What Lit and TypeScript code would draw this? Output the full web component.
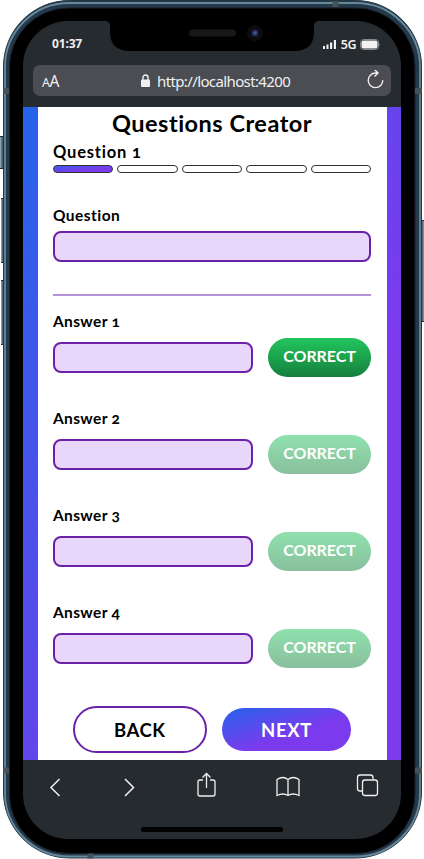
import { LitElement, html, svg, css } from "lit";
import { customElement } from "lit/decorators.js";

@customElement("pill-button")
class PillButton extends LitElement {
  static properties = { label: {}, kind: {} };
  declare label: string;
  declare kind: string;
  static styles = css`
    :host { display: block; }
    .b { box-sizing: border-box; width: 100%; height: 100%; border: 0; border-radius: 99px; padding: 0;
      display: block; color: #fff; font-family: Lato, sans-serif; font-weight: 700; text-align: center; }
    .correct { background: linear-gradient(#22c55e, #15803d); font-size: 16px; line-height: 36px; letter-spacing: -0.1px; height: 39px; padding-bottom: 3px; }
    .back { border: 2px solid #6b21a8; background: #fff; color: #000; font-size: 18.5px; letter-spacing: 0.5px; }
    .next { background: linear-gradient(to bottom right, #2563eb, #7c3aed 60%); font-size: 18.5px; letter-spacing: 0.6px; }
  `;
  render() {
    return html`<button class="b ${this.kind}">${this.label}</button>`;
  }
}

@customElement("answer-row")
class AnswerRow extends LitElement {
  static properties = { index: { type: Number }, chosen: { type: Boolean } };
  declare index: number;
  declare chosen: boolean;
  static styles = css`
    :host { display: block; height: 97px; }
    .label { height: 20px; line-height: 20px; font-weight: 700; font-size: 15.5px; letter-spacing: 0.35px; }
    .row { display: flex; gap: 15px; align-items: center; margin-top: 6.5px; height: 39px; }
    .input { box-sizing: border-box; width: 200px; height: 31px; border: 2px solid #6b21a8; border-radius: 8px; background: #e8d6fb; }
    .btn { width: 103px; height: 39px; }
    .faded { opacity: 0.5; }
  `;
  render() {
    return html`<div class="label">Answer ${this.index}</div>
      <div class="row">
        <div class="input"></div>
        <pill-button class="btn ${this.chosen ? "" : "faded"}" label="CORRECT" kind="correct"></pill-button>
      </div>`;
  }
}

@customElement("app-root")
class AppRoot extends LitElement {
  static styles = css`
    :host { display: block; position: relative; width: 424px; height: 859px; overflow: hidden; background: #fff; }
    .frame { position: absolute; left: 0; top: 0; }
    .screen { position: absolute; left: 23px; top: 21px; width: 378px; height: 818px; border-radius: 45px; overflow: hidden;
      background: #262b2f; display: flex; flex-direction: column; }
    .top { height: 86px; flex: none; box-sizing: border-box; padding: 12px 10px 0 10px; font-family: "Noto Sans", sans-serif; color: #f0f0f1; }
    .status { height: 32px; display: flex; justify-content: space-between; align-items: flex-start; padding: 0 10px 0 19px; font-size: 12px; line-height: 22px; font-weight: 700; letter-spacing: -0.15px; }
    .radio { display: flex; align-items: center; gap: 4px; height: 24px; font-size: 12.5px; font-weight: 600; letter-spacing: -0.5px; }
    .address { height: 31px; border-radius: 7px; background: #4b4d52; display: flex; align-items: center; padding: 0 7px 0 9px; font-size: 15px; letter-spacing: -0.62px; }
    .aa { width: 99px; font-size: 15.5px; letter-spacing: -0.4px; }
    .aa small { font-size: 12.5px; }
    .url { margin-left: 7px; flex: 1; padding-top: 1px; }
    .page { height: 653px; flex: none; box-sizing: border-box; padding: 0 14px 0 14.5px; background: linear-gradient(117deg, #2563eb, #7c3aed 69%); }
    .sheet { height: 653px; box-sizing: border-box; background: #fff; padding: 2px 16px 0 15.5px; color: #000; font-family: Lato, sans-serif;
      font-variant-ligatures: none; font-variant-numeric: oldstyle-nums; }
    h1 { margin: 0; height: 29px; line-height: 28px; text-align: center; font-size: 23.5px; font-weight: 700; letter-spacing: 0.5px; }
    .step { height: 26px; line-height: 29px; font-size: 16.5px; font-weight: 700; letter-spacing: 0.8px; }
    .bars { display: flex; gap: 4px; margin-top: 1px; }
    .bar { box-sizing: border-box; flex: 1; height: 8px; border: 1px solid #333; border-radius: 5px; }
    .on { background: linear-gradient(to bottom right, #3b5bea, #7c3aed 65%); }
    .label { margin-top: 32px; height: 20px; line-height: 20px; font-size: 15.5px; font-weight: 700; letter-spacing: 0.45px; }
    .input { box-sizing: border-box; margin-top: 6px; height: 31px; border: 2px solid #6b21a8; border-radius: 8px; background: #e8d6fb; }
    .rule { height: 2px; background: #b794d9; margin: 32px 0 15px; }
    .actions { display: flex; align-items: center; justify-content: center; gap: 15.5px; margin-top: 7px; }
    .back { width: 133.5px; height: 47px; }
    .next { width: 129px; height: 43px; }
    svg { display: block; flex: none; }
  `;
  frame() {
    return svg`
      <defs>
        <linearGradient id="key" x1="0" x2="1" y1="0" y2="0"><stop stop-color="#a4b5bc"/><stop offset=".4" stop-color="#5b7684"/><stop offset="1" stop-color="#1c303c"/></linearGradient>
        <linearGradient id="keyr" x1="1" x2="0" y1="0" y2="0"><stop stop-color="#8ea3ad"/><stop offset="1" stop-color="#1c303c"/></linearGradient>
      </defs>
      <rect x="0" y="136" width="4" height="33" fill="url(#key)"/><path d="M0 136.500h3M0 168.500h3" stroke="#1c2c37"/>
      <rect x="1" y="198" width="3" height="65" fill="url(#key)"/><path d="M1 198.500h2M1 262.500h2" stroke="#1c2c37"/>
      <rect x="1" y="280" width="3" height="65" fill="url(#key)"/><path d="M1 280.500h2M1 344.500h2" stroke="#1c2c37"/>
      <rect x="421" y="220" width="3" height="102" fill="url(#keyr)"/><path d="M422 220.500h2M422 321.500h2" stroke="#1c2c37"/>
      <rect x="3.500" y=".5" width="418" height="857.500" rx="66" fill="#25394a" stroke="#243641"/>
      <rect x="5" y="3" width="415" height="853.500" rx="64" fill="none" stroke="#66899c" stroke-width="1.800"/>
      <rect x="9.500" y="8" width="405.500" height="845.500" rx="59" fill="#000" stroke="#14202a" stroke-width="1"/>
      <path d="M3 91h6M415 91h7M3 770.500h6M415 770.500h7M335.500 1v6M90.500 853.500v5" stroke="#46525b" stroke-width="6" fill="none"/>`;
  }
  render() {
    return html`
      <svg class="frame" width="424" height="859">${this.frame()}</svg>
      <div class="screen">
        <div class="top">
          <div class="status"><span>01:37</span>
            <span class="radio">
              <svg width="14" height="10" fill="#f0f0f1"><rect x="0" y="6" width="2" height="3"/><rect x="3.500" y="4.500" width="2" height="4.500"/><rect x="7" y="2.500" width="2.200" height="6.500"/><rect x="10.800" y="0" width="2.200" height="9"/></svg>
              5G
              <svg width="21" height="12"><rect x=".5" y=".5" width="18" height="10" rx="3" fill="none" stroke="#85888b"/><rect x="1.500" y="1.500" width="16" height="8" rx="2" fill="#f2f2f2"/><path d="M19.500 4v3.500q1.500-1.700 0-3.500" fill="#85888b"/></svg>
            </span>
          </div>
          <div class="address">
            <span class="aa"><small>A</small>A</span>
            <svg width="9" height="14"><rect y="5.500" width="9" height="7.500" rx="1" fill="#f0f0f1"/><path d="M2 6V3.500a2.500 2.500 0 0 1 5 0V6" fill="none" stroke="#f0f0f1" stroke-width="1.400"/></svg>
            <span class="url">http://localhost:4200</span>
            <svg width="17" height="21" viewBox="0 2 17 21" fill="none" stroke="#f0f0f1" stroke-width="1.400"><path d="M10.500 5H8.500a7.300 7.300 0 1 0 7.300 7.300M7.500 1.500l3.500 3.500-3.500 3.500"/></svg>
          </div>
        </div>
        <div class="page"><div class="sheet">
          <h1>Questions Creator</h1>
          <div class="step">Question 1</div>
          <div class="bars">${[0, 1, 2, 3, 4].map((i) => html`<div class="bar ${i ? "" : "on"}"></div>`)}</div>
          <div class="label">Question</div>
          <div class="input"></div>
          <div class="rule"></div>
          ${[1, 2, 3, 4].map((i) => html`<answer-row .index=${i} .chosen=${i === 1}></answer-row>`)}
          <div class="actions">
            <pill-button class="back" label="BACK" kind="back"></pill-button>
            <pill-button class="next" label="NEXT" kind="next"></pill-button>
          </div>
        </div></div>
        <svg width="378" height="79" viewBox="23 760 378 79" fill="none" stroke="#f0f0f1" stroke-width="1.300">
          <path d="M59.500 779l-8.500 8.500 8.500 8.500M125 779l8.500 8.500-8.500 8.500" stroke-width="1.500"/>
          <path d="M203 780h-3q-2 0-2 2v12q0 2 2 2h13q2 0 2-2v-12q0-2-2-2h-3M206.500 788v-14M202.500 777.500l4-4 4 4"/>
          <path d="M288 779.500q-5-4-11 0v16q6-3 11 0q5-3 11 0v-16q-6-4-11 0v16"/>
          <rect x="362.500" y="780" width="15" height="15.500" rx="2.500"/><path d="M362 791h-2q-2.500 0-2.500-2.500v-11q0-2.500 2.500-2.500h10.500q2.500 0 2.500 2.500v2"/>
          <rect x="141" y="827" width="142" height="5" rx="2.500" fill="#000" stroke="none"/>
        </svg>
      </div>
      <svg class="frame" width="424" height="60">
        <defs><radialGradient id="lens"><stop stop-color="#5068b0"/><stop offset=".5" stop-color="#29346e"/><stop offset="1" stop-color="#10121c"/></radialGradient></defs>
        <path d="M105 19v2q5 0 5 5v6q0 19 20 19h164q20 0 20-19v-6q0-5 5-5v-2z" fill="#000"/>
        <rect x="189" y="29.500" width="47" height="7" rx="3.500" fill="#181818"/>
        <circle cx="255" cy="33" r="8" fill="#0c0c0e"/><circle cx="255" cy="33" r="4" fill="url(#lens)"/>
      </svg>`;
  }
}
